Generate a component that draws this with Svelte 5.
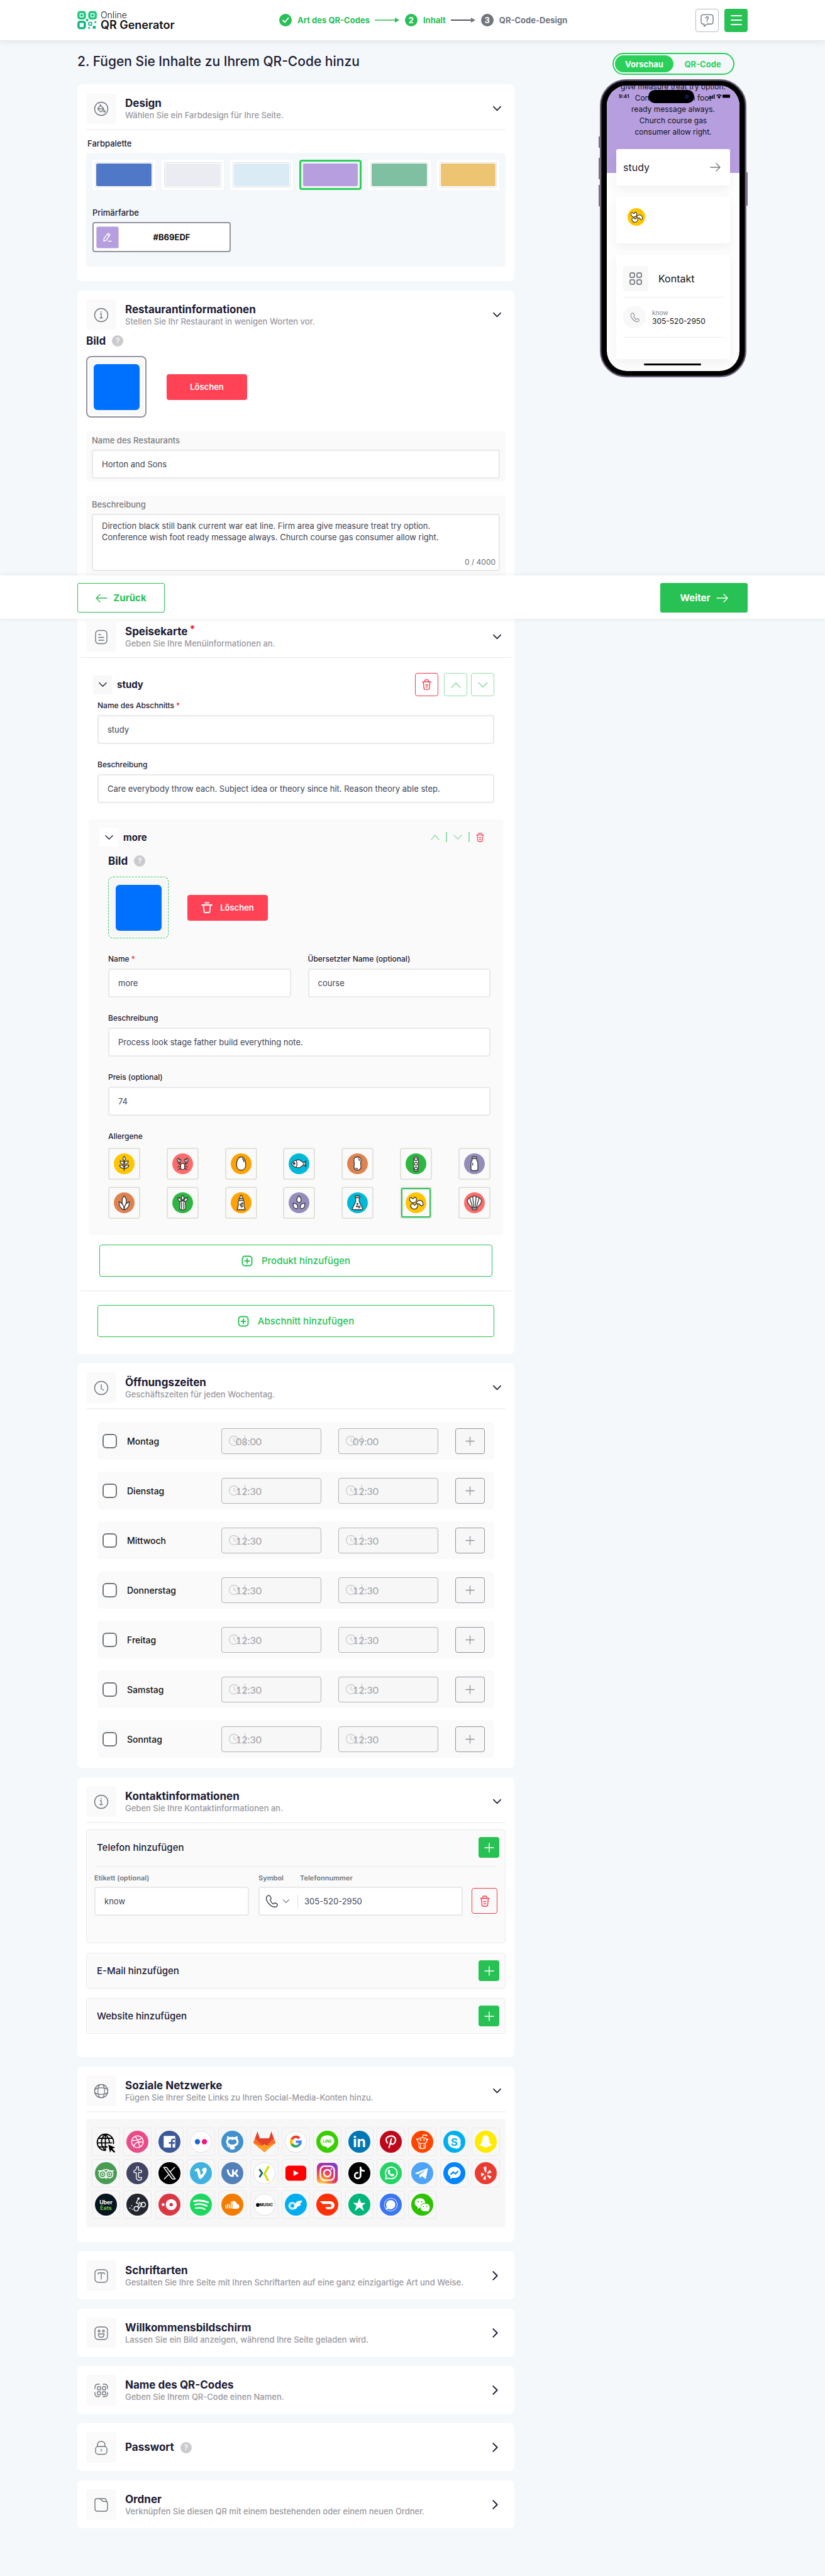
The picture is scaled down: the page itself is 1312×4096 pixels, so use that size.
<script>
  const palette = ['#5078c8', '#ebecf1', '#dbebf6', '#b69edf', '#80c0a2', '#edc572'];
  let chosen = $state(3);
  let color = $state('#B69EDF');

  const days = [
    ['Montag', '08:00', '09:00'],
    ['Dienstag', '12:30', '12:30'],
    ['Mittwoch', '12:30', '12:30'],
    ['Donnerstag', '12:30', '12:30'],
    ['Freitag', '12:30', '12:30'],
    ['Samstag', '12:30', '12:30'],
    ['Sonntag', '12:30', '12:30']
  ];

  const beans = '<path d="M7 11c1-3 3-3 4-1s3 1 4-1 4 0 4 3c0 4-3 6-6 6s-7-3-6-7z"/><path d="M20 16c2-3 7-3 9 0s2 6 0 7-3 0-4-2-2-1-4-1-3-2-1-4z"/><path d="M9 22c1-3 4-3 5-1s3 1 4-1 4 1 3 4-3 5-6 5-7-3-6-7z"/>';
  const allergens = [
    { name: 'Gluten', bg: '#ffc600', art: '<path d="M18 30V11"/><path d="M18 5c3 3 3 6 0 8-3-2-3-5 0-8z"/><path d="M18 19c-5 0-7-2-7-6 5 0 7 2 7 6zM18 19c5 0 7-2 7-6-5 0-7 2-7 6z"/><path d="M18 26c-5 0-8-2-8-6 5 0 8 2 8 6zM18 26c5 0 8-2 8-6-5 0-8 2-8 6z"/>' },
    { name: 'Krebstiere', bg: '#ff6b6b', art: '<path fill="none" d="M14 20l-5-4M22 20l5-4M14 23H9M22 23h5M15 26l-5 2M21 26l5 2M14 18l-2-4M22 18l2-4"/><path d="M11 8c-3 1-4 6 1 7 3 0 4-3 2-5l-2 2zM25 8c3 1 4 6-1 7-3 0-4-3-2-5l2 2z"/><rect x="14.500" y="17" width="7" height="11" rx="3.500"/>' },
    { name: 'Ei', bg: '#ffa200', art: '<path d="M18 6c5 0 8 7 8 13s-3 10-8 10-8-4-8-10 3-13 8-13z"/><path fill="none" d="M20 9c2 2 3 4 3 6"/>' },
    { name: 'Fisch', bg: '#00b9d8', art: '<path d="M5 18c3-6 9-7 13-7 4 1 6 4 8 6l4-4c-1 3-1 7 0 10l-4-4c-2 2-4 5-8 6-4 0-10-1-13-7z"/><path fill="none" d="M13 12c2 4 2 8 0 12"/><circle cx="9.500" cy="17.500" r="1.500" fill="#333"/>' },
    { name: 'Erdnuss', bg: '#de8350', art: '<path d="M18 6c5 0 7 3 6 7s-1 5 0 9-2 7-6 7-7-3-6-7 1-5 0-9 1-7 6-7z"/><path fill="none" d="M19 9c2 0 3 2 2 4M15 25c1 2 3 2 4 1"/>' },
    { name: 'Soja', bg: '#2cb742', art: '<path d="M18 5c4 0 5 4 4 8 1 3 1 6 0 9 1 4 0 9-4 9s-5-5-4-9c-1-3-1-6 0-9-1-4 0-8 4-8z"/><circle cx="18" cy="10" r="2.500"/><circle cx="18" cy="18" r="2.500"/><circle cx="18" cy="26" r="2.500"/>' },
    { name: 'Milch', bg: '#948cba', art: '<path d="M14 9h8v3c2 2 2 3 2 5v10q0 3-3 3h-6q-3 0-3-3V17c0-2 0-3 2-5z"/><rect x="14" y="6" width="8" height="3" rx="1"/><path d="M15 16v5"/>' },
    { name: 'Mais', bg: '#de8350', art: '<path d="M18 6c5 5 5 14 0 22-5-8-5-17 0-22z"/><path d="M18 30c-5-1-9-5-9-14 5 2 9 7 9 14zM18 30c5-1 9-5 9-14-5 2-9 7-9 14z"/>' },
    { name: 'Sellerie', bg: '#2cb742', art: '<path d="M13 15c1 5-1 9 0 14q5 3 10 0c1-5-1-9 0-14z"/><path d="M18 5c3 3 3 6 0 9-3-3-3-6 0-9zM10 9c4 0 6 3 5 7-3 0-6-3-5-7zM26 9c-4 0-6 3-5 7 3 0 6-3 5-7z"/><path d="M16 17v12M20 17v12"/>' },
    { name: 'Senf', bg: '#ffa200', art: '<path d="M17 5h2l2 6h-6z"/><rect x="14" y="11" width="8" height="3"/><path d="M14 14h8c3 3 0 6 1 9l2 7H11l2-7c1-3-2-6 1-9z"/><circle cx="17" cy="21" r="1"/><circle cx="20" cy="19" r="1"/><circle cx="19" cy="24" r="1.500"/>' },
    { name: 'Sesam', bg: '#948cba', art: '<path d="M18 6c5 4 5 10 0 12-5-2-5-8 0-12zM8 19c7 0 9 4 7 9-5 1-8-3-7-9zM28 19c-7 0-9 4-7 9 5 1 8-3 7-9z"/>' },
    { name: 'Sulfite', bg: '#00b9d8', art: '<path d="M15 8h6v8l6 12q0 2-2 2H11q-2 0-2-2l6-12z"/><path d="M14 6h8v3h-8z"/><circle cx="18" cy="20" r="1"/><circle cx="17" cy="24" r="1"/><circle cx="21" cy="25" r="1.500"/>' },
    { name: 'Lupine', bg: '#ffc600', art: beans },
    { name: 'Weichtiere', bg: '#ff6b6b', art: '<path d="M14 27C9 22 5 18 6 13c1-3 3-2 4-4 2-2 4 0 5-2 2-1 4-1 6 0 1 2 3 0 5 2 1 2 3 1 4 4 1 5-3 9-8 14z"/><path d="M15 27l-5-17M17 27L15 7M19 27l2-20M21 27l5-17"/><path d="M14 27h8v3h-8z"/>' }
  ];
  let allergen = $state(12);

  const white = (d) => `<path fill="#fff" d="${d}"/>`;
  const line = (d, w = 1.6, c = '#fff') => `<path fill="none" stroke="${c}" stroke-width="${w}" stroke-linecap="round" stroke-linejoin="round" d="${d}"/>`;
  const word = (t, s, y = 26, c = '#fff', x = 19) => `<text x="${x}" y="${y}" font-size="${s}" font-weight="700" fill="${c}" text-anchor="middle">${t}</text>`;

  const social = [
    { name: 'Webseite', bg: 'none', art: '<g transform="translate(-1 1)">' + line('M19 5a14 14 0 1 0 0 28M19 5a14 14 0 0 1 14 16M19 5v28M19 5c-9 8-9 20 0 28M19 5c5 5 7 10 7 15M7 12h24M5 20h25M8 27h14', 2, '#000') + '<path d="M24 23l12 5-5 2 5 5-2 2-5-5-2 5z"/></g>' },
    { name: 'Dribbble', bg: '#ea4c89', art: line('M19 9a10 10 0 1 0 .1 0M15 10c4 4 7 11 8 18M10 17c8 0 14-1 17-5M12 27c3-7 9-9 17-7') },
    { name: 'Facebook', bg: '#3b5998', art: '<rect x="9" y="9" width="20" height="20" rx="1" fill="#fff"/>' + line('M27 15h-1q-3 0-3 3v11M19 21h8', 2.8, '#3b5998') },
    { name: 'Flickr', bg: '#fff', ring: true, art: '<circle cx="13" cy="19" r="4.500" fill="#1c63dd"/><circle cx="25" cy="19" r="4.500" fill="#ff0e84"/>' },
    { name: 'GitHub', bg: '#4191cd', art: white('M10 9l5 2q4-1 8 0l5-2v5q3 3 1 8-1 4-6 5v5q-4 1-8 0v-5q-5-1-6-5-2-5 1-8z') + '<path fill="#4191cd" d="M13 16q2-2 6 0 4-2 6 0 3 3 0 6-2 2-6 2t-6-2q-3-3 0-6z"/>' + line('M15 28q-3 1-5-2', 1.5) },
    { name: 'GitLab', bg: 'none', art: '<path fill="#e24329" d="M0 21L7 1l4 12h16L31 1l7 20-19 16z"/><path fill="#fc6d26" d="M0 21l3-8h8l8 24zM38 21l-3-8h-8l-8 24z"/><path fill="#fca326" d="M0 21l14 6 5 10zM38 21l-14 6-5 10z"/><path fill="#e24329" d="M3 13h32L19 29z"/><path fill="#fca326" d="M13 27l6 10 6-10-6-4z"/>' },
    { name: 'Google', bg: '#fff', ring: true, art: '<g fill="none" stroke-width="4.500"><path stroke="#ea4335" d="M12 15a8 8 0 0 1 13-2"/><path stroke="#fbbc05" d="M12 23a8 8 0 0 1 0-8"/><path stroke="#34a853" d="M12 23a8 8 0 0 0 12 2"/><path stroke="#4285f4" d="M24 25a8 8 0 0 0 3-6h-8"/></g>' },
    { name: 'LINE', bg: '#3ace01', art: white('M19 8c7 0 12 4 12 10s-7 9-12 13v-3c-7 0-12-4-12-10S12 8 19 8z') + word('LINE', 7, 21, '#3ace01') },
    { name: 'LinkedIn', bg: '#0077b5', art: word('in', 25, 28) },
    { name: 'Pinterest', bg: '#bd081c', art: line('M13 21c-5-7 0-12 7-12 6 0 9 6 6 11-2 4-6 4-7 1M20 14l-4 15', 2.4) },
    { name: 'Reddit', bg: '#ff4500', art: line('M19 12l2-5 4 1M19 12c-5 0-8 2-8 5s3 5 8 5 8-2 8-5-3-5-8-5zM14 22c-2 5-1 9 5 9s7-4 5-9M16 24v7M22 24v7', 1.3) + '<g fill="#fff"><circle cx="16" cy="16" r="1.500"/><circle cx="22" cy="16" r="1.500"/><circle cx="26" cy="8" r="1.500"/><circle cx="10" cy="15" r="1.500"/><circle cx="28" cy="15" r="1.500"/></g>' },
    { name: 'Skype', bg: '#00aff0', art: '<circle cx="15" cy="14" r="7" fill="#fff"/><circle cx="23" cy="24" r="7" fill="#fff"/><circle cx="19" cy="19" r="11" fill="#fff"/>' + word('S', 18, 26, '#00aff0') },
    { name: 'Snapchat', bg: '#ffea00', art: white('M19 8c5 0 6 4 5 9l3-1c0 2-2 2-2 3 1 3 3 4 5 5-1 2-3 1-4 3-3-1-4 2-7 2s-4-3-7-2c-1-2-3-1-4-3 2-1 4-2 5-5 0-1-2-1-2-3l3 1c-1-5 0-9 5-9z') },
    { name: 'Tripadvisor', bg: '#4a9c54', art: line('M6 15h6c4-3 10-3 14 0h6M13 15a6 6 0 1 0 .1 0M25 15a6 6 0 1 0 .1 0M17 25l2 3 2-3', 1.8) + line('M13 18.500a2.500 2.500 0 1 0 .1 0M25 18.500a2.500 2.500 0 1 0 .1 0', 1.4) },
    { name: 'Tumblr', bg: '#414561', art: line('M18 8h3v6h5v4h-5v7q0 3 5 1v4c-6 3-9 0-9-4v-8h-4v-3q4-1 5-7z', 1.5) },
    { name: 'X', bg: '#000', art: line('M9 9h5l15 20h-5zM28 9l-8 8M18 21l-8 8', 1.6) },
    { name: 'Vimeo', bg: '#41b1dd', art: white('M8 14c4-4 7-6 9 0l2 9c3-3 5-6 3-8-2-1-2 1-2 1 1-7 9-9 9-3 0 5-8 16-11 16-4 0-4-10-6-13-1-2-3 0-3 0z') },
    { name: 'VK', bg: '#5181b8', art: line('M11 14c1 6 4 10 9 10V14M27 14c-1 3-3 5-6 5 3 0 5 2 7 5', 3.2) },
    { name: 'XING', bg: '#fff', ring: true, art: line('M11 13l4 6-4 6', 3, '#0b6365') + line('M26 8l-7 12 6 11', 3.4, '#cfdc00') },
    { name: 'YouTube', bg: 'none', art: '<rect x="1" y="6" width="36" height="26" rx="6" fill="red"/>' + white('M15 14l9 5-9 5z') },
    { name: 'Instagram', bg: 'insta', art: '<g fill="none" stroke="#fff" stroke-width="2.500"><rect x="7" y="7" width="24" height="24" rx="7"/><circle cx="19" cy="19" r="6"/></g><circle cx="26" cy="12" r="1.500" fill="#fff"/>' },
    { name: 'TikTok', bg: '#000', art: line('M21 9v14a5 5 0 1 1-5-5M21 10q1 5 6 5', 3) },
    { name: 'WhatsApp', bg: '#25d366', art: line('M10 29l1.500-5a10 10 0 1 1 4 3.500z', 2) + white('M15 13c2-1 3 1 3 3l-1 1c1 2 2 3 4 4l1-1c2 0 3 1 3 2-1 3-4 3-7 1s-6-6-3-10z') },
    { name: 'Telegram', bg: '#4ea4f6', art: white('M6 19l23-9-4 19-7-5-3 4-1-6 12-9-15 8z') },
    { name: 'Messenger', bg: '#0084ff', art: white('M19 8c6 0 11 4 11 10s-6 11-14 9l-4 2v-4c-3-2-4-4-4-7 0-6 5-10 11-10z') + line('M13 21l4-4 4 3 4-4', 2.4, '#0084ff') },
    { name: 'Yelp', bg: '#eb3b30', art: white('M15 9l5-2v10l-2 1zM21 19l5-6 3 5-7 2zM22 22l7 3-3 4-5-6zM19 23v8l-5-2 4-6zM11 18l6 3-6 4z') },
    { name: 'Uber Eats', bg: '#04151f', art: word('Uber', 9.5, 18) + word('Eats', 9.5, 28, '#76c043') },
    { name: 'Postmates', bg: '#23252f', art: line('M20 10l-3 6 5 2-2 5M17 22a4 4 0 1 0 .1 0M29 15a4 4 0 1 0 .1 0M22 15l5 3-6 8', 1.6) + '<g fill="#fff"><circle cx="21" cy="8.500" r="2"/><circle cx="6" cy="25" r="1"/><circle cx="9" cy="21" r="1"/><circle cx="10" cy="27" r="1"/></g>' },
    { name: 'OpenTable', bg: '#da3743', art: '<circle cx="22" cy="19" r="9.500" fill="#fff"/><circle cx="22" cy="19" r="3" fill="#da3743"/><circle cx="8" cy="19" r="2.500" fill="#fff"/>' },
    { name: 'Spotify', bg: '#1ed760', art: line('M7 13c8-2 17-1 24 2', 3.2) + line('M9 19c7-2 14-1 20 2', 2.8) + line('M10 25c6-1 11-1 16 2', 2.4) },
    { name: 'SoundCloud', bg: '#f37c00', art: line('M8 20v5M11 18v7M14 19v6M17 14v11', 1.6) + white('M19 13c4-2 7 1 8 5 3 0 4 2 4 4q0 4-4 4h-8z') },
    { name: 'Apple Music', bg: '#fff', ring: true, art: '<ellipse cx="7.500" cy="19.500" rx="3" ry="3.300"/>' + word('MUSIC', 7, 22, '#000', 22) },
    { name: 'OnlyFans', bg: '#00aeef', art: '<circle cx="13" cy="21" r="5" fill="none" stroke="#bfeaff" stroke-width="4"/>' + white('M17 21c1-6 4-9 13-9-1 4-3 5-5 5l3 1c-2 4-4 4-6 4-1 4-4 5-6 5z') },
    { name: 'DoorDash', bg: '#ff3008', art: white('M6 13h17c11 0 11 13 2 14h-7l-3-4h9c3 0 3-5-1-5H11z') },
    { name: 'Trustpilot', bg: '#00b67a', art: white('M19 8l3 8h8l-6 5 3 9-8-6-8 6 3-9-6-5h8z') },
    { name: 'Signal', bg: '#3a76f0', art: '<circle cx="19" cy="19" r="11" fill="none" stroke="#fff" stroke-width="1.300" stroke-dasharray="2 1"/>' + white('M19 11a8 8 0 1 1-4 15l-5 2 2-5a8 8 0 0 1 7-12z') },
    { name: 'WeChat', bg: '#2dc100', art: white('M15 8c5 0 9 3 9 8-6 0-9 4-8 8l-5 2v-3C3 19 5 8 15 8z') + white('M24 17c5 0 8 3 8 7q0 3-2 5v2l-3-1c-7 2-11-2-11-6s3-7 8-7z') + '<g fill="#2dc100"><circle cx="12" cy="14" r="1.200"/><circle cx="18" cy="14" r="1.200"/><circle cx="21" cy="22" r="1"/><circle cx="27" cy="22" r="1"/></g>' }
  ];

  const glyphs = {
    drop: '<circle cx="12" cy="12" r="10.500"/><path d="M11 6.500l4.500 4.500q1 1 0 2l-2.500 3q-1.500 1.500-3 0l-3-3q-1-1 0-2l4-4.500zM7 12h9M10.500 5v3"/><circle cx="17" cy="16" r="1.200"/>',
    info: '<circle cx="12" cy="12" r="10.500"/><path d="M10.500 10H12v6.500M10 16.500h4M12 6.500v1"/>',
    menu: '<rect x="3" y="1.500" width="18" height="21" rx="5"/><path d="M8 8h3M8 12.500h8M8 17h8"/>',
    clock: '<circle cx="12" cy="12" r="10.500"/><path d="M12 6.500V13l4 2.500"/>',
    globe: '<circle cx="12" cy="12" r="10.500"/><path d="M9 2c-3 6-3 14 0 20M15 2c3 6 3 14 0 20M2 9c6-3 14-3 20 0M2 15c6 3 14 3 20 0"/>',
    type: '<rect x="2" y="2" width="20" height="20" rx="5"/><path d="M7 9V8q0-1 1-1h8q1 0 1 1v1M12 7v10"/>',
    smile: '<rect x="2" y="2" width="20" height="20" rx="5"/><circle cx="8.500" cy="8.500" r="1.500"/><circle cx="15.500" cy="8.500" r="1.500"/><path d="M7.500 13h9q0 5.500-4.500 5.500T7.500 13z"/>',
    qr: '<path d="M2 9V7q0-5 5-5h2M15 2h2q5 0 5 5v2M22 15v2q0 5-5 5h-2M9 22H7q-5 0-5-5v-2"/><rect x="6" y="6" width="5" height="5" rx="1"/><rect x="14" y="6" width="5" height="5" rx="1"/><rect x="6" y="14" width="5" height="5" rx="1"/><rect x="14" y="14" width="5" height="5" rx="1"/>',
    lock: '<path d="M6 10V8q0-6 6-6t6 6v2M12 14.500v3"/><rect x="3" y="10" width="18" height="12.500" rx="4"/>',
    folder: '<path d="M9 2h8q3 0 3 3v1.500q2 1 2 3V18q0 4-4 4H6q-4 0-4-4V5q0-3 3-3h4q2 0 3 2l1 1q1 1.500 3 1.500h5"/>'
  };

  const closed = [
    { icon: 'type', title: 'Schriftarten', sub: 'Gestalten Sie Ihre Seite mit Ihren Schriftarten auf eine ganz einzigartige Art und Weise.' },
    { icon: 'smile', title: 'Willkommensbildschirm', sub: 'Lassen Sie ein Bild anzeigen, während Ihre Seite geladen wird.' },
    { icon: 'qr', title: 'Name des QR-Codes', sub: 'Geben Sie Ihrem QR-Code einen Namen.' },
    { icon: 'lock', title: 'Passwort', help: true },
    { icon: 'folder', title: 'Ordner', sub: 'Verknüpfen Sie diesen QR mit einem bestehenden oder einem neuen Ordner.' }
  ];
</script>

{#snippet chevron(dir, size)}
  <svg width={size} height={size} viewBox="0 0 16 16" class="stroke" aria-hidden="true">
    <path d={dir === 'up' ? 'M2 12l6-7 6 7' : dir === 'right' ? 'M5 2l6 6-6 6' : 'M2 5l6 6 6-6'} />
  </svg>
{/snippet}

{#snippet trash(size)}
  <svg width={size} height={size} viewBox="0 0 18 18" class="stroke" aria-hidden="true">
    <path d="M2 4.500h14M6 4V2q0-1 1-1h4q1 0 1 1v2M3.500 5l1 10q0 2 2 2h5q2 0 2-2l1-10M7 9.500h4M7.500 13h3" />
  </svg>
{/snippet}

{#snippet plus(size)}
  <svg width={size} height={size} viewBox="0 0 16 16" class="stroke" aria-hidden="true"><path d="M8 1v14M1 8h14" /></svg>
{/snippet}

{#snippet boxPlus()}
  <svg width="18" height="18" viewBox="0 0 18 18" class="stroke bold" aria-hidden="true">
    <rect x="1.500" y="1.500" width="15" height="15" rx="4" /><path d="M9 5.500v7M5.500 9h7" />
  </svg>
{/snippet}

{#snippet phoneIcon(size)}
  <svg width={size} height={size} viewBox="0 0 20 20" class="stroke" aria-hidden="true">
    <path d="M3 2c2-2 4-1 5 1l1 2c1 2-2 2-1 4s2 4 4 5 2-2 4-1l2 1c2 1 1 4-1 5C9 21-2 8 3 2z" />
  </svg>
{/snippet}

{#snippet head(icon, title, sub, open, extra)}
  <button class="head" aria-expanded={open}>
    <span class="icon-box">
      <svg width="24" height="24" viewBox="0 0 24 24" aria-hidden="true">{@html glyphs[icon]}</svg>
    </span>
    <span class="head-text">
      <span class="head-title">{title}{#if extra === 'star'}<sup>*</sup>{/if}{#if extra === 'help'}<i class="help">?</i>{/if}</span>
      {#if sub}<span class="head-sub">{sub}</span>{/if}
    </span>
    <span class="head-arrow">{@render chevron(open ? 'down' : 'right', open ? 15 : 17)}</span>
  </button>
{/snippet}

<div class="page">
  <header>
    <div class="wrap top">
      <a class="logo" href="/" aria-label="Online QR Generator">
        <svg width="31" height="30" viewBox="0 0 34 32" aria-hidden="true">
          <g fill="none" stroke="#1dca7c" stroke-width="4">
            <rect x="2" y="2" width="11" height="11" rx="3" />
            <rect x="21" y="2" width="11" height="11" rx="3" />
            <rect x="2" y="19" width="11" height="11" rx="3" stroke="#17b584" />
            <rect x="20" y="20" width="5" height="5" rx="1" stroke="#17b584" stroke-width="2" />
          </g>
          <g fill="#17b584">
            <rect x="5.500" y="5.500" width="4" height="4" /><rect x="24.500" y="5.500" width="4" height="4" />
            <rect x="15" y="14" width="4" height="4" /><rect x="30" y="18" width="3" height="3" />
            <rect x="27" y="26" width="5" height="5" /><rect x="19" y="28" width="3" height="3" />
          </g>
        </svg>
        <span class="logo-text"><span>Online</span><b>QR Generator</b></span>
      </a>

      <ol class="steps">
        <li class="done">
          <span class="dot"><svg width="12" height="12" viewBox="0 0 12 12" class="stroke bold" aria-hidden="true"><path d="M2 6.500L5 9.500 10.500 2.500" /></svg></span>
          Art des QR-Codes
        </li>
        <li class="arrow green"><svg width="40" height="10" viewBox="0 0 40 10" aria-hidden="true"><path d="M0 5h32" stroke="currentColor" stroke-width="1.500" /><path d="M32 1l7 4-7 4z" fill="currentColor" /></svg></li>
        <li class="done"><span class="dot">2</span>Inhalt</li>
        <li class="arrow"><svg width="40" height="10" viewBox="0 0 40 10" aria-hidden="true"><path d="M0 5h33" stroke="#231f40" stroke-width="1.500" /><path d="M32 1l7 4-7 4z" fill="#70757d" /></svg></li>
        <li><span class="dot">3</span>QR-Code-Design</li>
      </ol>

      <div class="tools">
        <button class="tool" aria-label="Hilfe">
          <svg width="21" height="21" viewBox="0 0 22 22" class="stroke" aria-hidden="true"><path d="M5 1.500h12q4 0 4 4V13q0 4-4 4h-6l-5 4v-4H5q-4 0-4-4V5.500q0-4 4-4zM9 7q0-2 2-2t2 2q0 1.500-2 2.500v1.500M11 13v.5" /></svg>
        </button>
        <button class="tool menu" aria-label="Menü">
          <svg width="18" height="18" viewBox="0 0 18 18" class="stroke bold" aria-hidden="true"><path d="M1 2h16M1 9h16M1 16h16" /></svg>
        </button>
      </div>
    </div>
  </header>

  <div class="wrap columns">
    <main class="main">
      <h1>2. Fügen Sie Inhalte zu Ihrem QR-Code hinzu</h1>

      <section class="card design">
        {@render head('drop', 'Design', 'Wählen Sie ein Farbdesign für Ihre Seite.', true)}
        <hr />
        <h2 class="small-label">Farbpalette</h2>
        <div class="palette">
          <div class="swatches">
            {#each palette as c, i}
              <button class="swatch" class:on={chosen === i} aria-label={'Farbe ' + c} aria-pressed={chosen === i} onclick={() => (chosen = i)}>
                <span><i style:background={c}></i></span>
              </button>
            {/each}
          </div>
          <label class="small-label" for="primary">Primärfarbe</label>
          <div class="color-field">
            <button aria-label="Farbe bearbeiten">
              <svg width="16" height="16" viewBox="0 0 16 16" class="stroke" aria-hidden="true"><path d="M9 2l3 2-6 9-4 1.500L2.500 10zM8 4l3 2M9 14.500h5" /></svg>
            </button>
            <input id="primary" bind:value={color} />
          </div>
        </div>
      </section>

      <section class="card cut-bottom">
        {@render head('info', 'Restaurantinformationen', 'Stellen Sie Ihr Restaurant in wenigen Worten vor.', true)}
        <h2 class="bild">Bild <i class="help">?</i></h2>
        <div class="upload">
          <button class="picture" aria-label="Bild ändern"><span></span></button>
          <button class="delete">Löschen</button>
        </div>
        <div class="panel">
          <label for="rname">Name des Restaurants</label>
          <input id="rname" value="Horton and Sons" />
        </div>
        <div class="panel last">
          <label for="rdesc">Beschreibung</label>
          <div class="area">
            <textarea id="rdesc">Direction black still bank current war eat line. Firm area give measure treat try option. Conference wish foot ready message always. Church course gas consumer allow right.</textarea>
            <span>0 / 4000</span>
          </div>
        </div>
      </section>
    </main>

    <aside>
      <div class="toggle">
        <button class="on">Vorschau</button>
        <button>QR-Code</button>
      </div>
      <div class="phone">
        <span class="key k1"></span><span class="key k2"></span><span class="key k3"></span><span class="key k4"></span>
        <div class="screen">
          <div class="island"></div>
          <span class="time">9:41</span>
          <svg class="signal" width="34" height="8" viewBox="0 0 34 8" aria-hidden="true">
            <path d="M0 6h1.500v2H0zM3 4h1.500v4H3zM5.500 2.500H7V8H5.500zM8 1h1.500v7H8zM12 3q4.500-4 9 0l-1 1q-3.500-3-7 0zM14 5q2.500-2 5 0l-2.500 3zM23 1.500h10q1 0 1 1v3q0 1-1 1H23q-1 0-1-1v-3q0-1 1-1z" />
          </svg>
          <div class="intro">
            <p>give measure treat try option.<br />Conference wish foot<br />ready message always.<br />Church course gas<br />consumer allow right.</p>
          </div>
          <div class="sheet">
            <a class="p-card study" href="#study">study
              <svg width="18" height="14" viewBox="0 0 18 14" class="stroke" aria-hidden="true"><path d="M1 7h15M10 1l6 6-6 6" /></svg>
            </a>
            <div class="p-card product">
              <svg width="28" height="28" viewBox="0 0 36 36" aria-hidden="true"><circle cx="18" cy="18" r="18" fill="#ffc600" /><g fill="#fff" stroke="#333" stroke-width="1.400">{@html beans}</g></svg>
            </div>
            <div class="p-card contact">
              <div class="p-head">
                <span>
                  <svg width="20" height="20" viewBox="0 0 20 20" class="stroke bold" aria-hidden="true"><rect x="1" y="1" width="7" height="7" rx="2" /><rect x="12" y="1" width="7" height="7" rx="2" /><rect x="1" y="12" width="7" height="7" rx="2" /><rect x="12" y="12" width="7" height="7" rx="2" /></svg>
                </span>
                Kontakt
              </div>
              <div class="p-row">
                <span>{@render phoneIcon(15)}</span>
                <div><small>know</small>305-520-2950</div>
              </div>
            </div>
          </div>
          <div class="home"></div>
        </div>
      </div>
    </aside>
  </div>

  <nav class="bar">
    <div class="wrap">
      <button class="back">
        <svg width="19" height="16" viewBox="0 0 19 16" class="stroke" aria-hidden="true"><path d="M18 8H1M7 2L1 8l6 6" /></svg>Zurück
      </button>
      <button class="next">Weiter
        <svg width="19" height="16" viewBox="0 0 19 16" class="stroke" aria-hidden="true"><path d="M1 8h17M12 2l6 6-6 6" /></svg>
      </button>
    </div>
  </nav>

  <div class="wrap">
    <div class="main">
      <section class="card cut-top">
        {@render head('menu', 'Speisekarte', 'Geben Sie Ihre Menüinformationen an.', true, 'star')}
        <hr class="wide" />
        <div class="part">
          <div class="part-head">
            <button class="fold" aria-label="Einklappen">{@render chevron('down', 15)}</button>
            <h3>study</h3>
            <button class="sq red" aria-label="Abschnitt löschen">{@render trash(17)}</button>
            <button class="sq soft gap" aria-label="Nach oben">{@render chevron('up', 18)}</button>
            <button class="sq soft" aria-label="Nach unten">{@render chevron('down', 18)}</button>
          </div>
          <label for="sname">Name des Abschnitts <em>*</em></label>
          <input id="sname" value="study" />
          <label for="sdesc">Beschreibung</label>
          <input id="sdesc" value="Care everybody throw each. Subject idea or theory since hit. Reason theory able step." />
        </div>

        <div class="product-panel">
          <div class="part-head small">
            <button class="fold" aria-label="Einklappen">{@render chevron('down', 15)}</button>
            <h3>more</h3>
            <div class="mini">
              <button aria-label="Nach oben">{@render chevron('up', 16)}</button><i></i>
              <button aria-label="Nach unten">{@render chevron('down', 16)}</button><i></i>
              <button class="red" aria-label="Produkt löschen">{@render trash(15)}</button>
            </div>
          </div>
          <div class="product-body">
            <h2 class="bild">Bild <i class="help">?</i></h2>
            <div class="upload">
              <button class="picture dashed" aria-label="Produktbild ändern"><span></span></button>
              <button class="delete">
                <svg width="18" height="18" viewBox="0 0 18 18" class="stroke bold" aria-hidden="true"><path d="M1 5h16M6 1.500h6M3.500 5.500l1 9.500q0 2 2 2h5q2 0 2-2l1-9.500" /></svg>Löschen
              </button>
            </div>
            <div class="pair">
              <div><label for="pname">Name <em>*</em></label><input id="pname" value="more" /></div>
              <div><label for="ptrans">Übersetzter Name (optional)</label><input id="ptrans" value="course" /></div>
            </div>
            <label for="pdesc">Beschreibung</label>
            <input id="pdesc" value="Process look stage father build everything note." />
            <label for="price">Preis (optional)</label>
            <input id="price" value="74" />
            <h4>Allergene</h4>
            <div class="allergens">
              {#each allergens as a, i}
                <button class="tile" class:on={allergen === i} aria-label={a.name} aria-pressed={allergen === i} onclick={() => (allergen = i)}>
                  <svg width="33" height="33" viewBox="0 0 36 36" aria-hidden="true">
                    <circle cx="18" cy="18" r="18" fill={a.bg} />
                    <g fill="#fff" stroke="#333" stroke-width="1.400" stroke-linejoin="round">{@html a.art}</g>
                  </svg>
                </button>
              {/each}
            </div>
          </div>
        </div>
        <button class="add product-add">{@render boxPlus()}Produkt hinzufügen</button>
        <hr class="wide" />
        <button class="add section-add">{@render boxPlus()}Abschnitt hinzufügen</button>
      </section>

      <section class="card hours">
        {@render head('clock', 'Öffnungszeiten', 'Geschäftszeiten für jeden Wochentag.', true)}
        <hr />
        <div class="days">
          {#each days as [day, from, to]}
            <div class="day">
              <label><input type="checkbox" />{day}</label>
              {#each [from, to] as time, i}
                <div class="time-field">
                  <svg width="28" height="18" viewBox="0 0 28 18" class="stroke" aria-hidden="true"><circle cx="9" cy="9" r="7.500" /><path d="M9 5v4l3 2M26.500 0v18" /></svg>
                  <input value={time} disabled aria-label={day + (i ? ' bis' : ' von')} />
                </div>
              {/each}
              <button aria-label={'Zeitraum für ' + day + ' hinzufügen'}>{@render plus(15)}</button>
            </div>
          {/each}
        </div>
      </section>

      <section class="card contact-card">
        {@render head('info', 'Kontaktinformationen', 'Geben Sie Ihre Kontaktinformationen an.', true)}
        <hr />
        <div class="group">
          <div class="group-head"><h3>Telefon hinzufügen</h3><button aria-label="Telefon hinzufügen">{@render plus(16)}</button></div>
          <hr />
          <div class="tel">
            <div class="tag">
              <label for="tag">Etikett (optional)</label>
              <input id="tag" value="know" />
            </div>
            <div class="number">
              <div class="labels"><label for="symbol">Symbol</label><label for="tel">Telefonnummer</label></div>
              <div class="number-field">
                <div class="symbol">
                  {@render phoneIcon(20)}{@render chevron('down', 12)}
                  <select id="symbol"><option>Telefon</option><option>Mobil</option><option>Fax</option></select>
                </div>
                <input id="tel" value="305-520-2950" />
              </div>
            </div>
            <button class="sq red" aria-label="Telefon löschen">{@render trash(18)}</button>
          </div>
        </div>
        <div class="group short">
          <div class="group-head"><h3>E-Mail hinzufügen</h3><button aria-label="E-Mail hinzufügen">{@render plus(16)}</button></div>
        </div>
        <div class="group short">
          <div class="group-head"><h3>Website hinzufügen</h3><button aria-label="Website hinzufügen">{@render plus(16)}</button></div>
        </div>
      </section>

      <section class="card social-card">
        {@render head('globe', 'Soziale Netzwerke', 'Fügen Sie Ihrer Seite Links zu Ihren Social-Media-Konten hinzu.', true)}
        <hr />
        <div class="social">
          {#each social as s}
            <button aria-label={s.name}>
              <svg width="35" height="35" viewBox="0 0 38 38" aria-hidden="true">
                {#if s.bg === 'insta'}
                  <defs>
                    <radialGradient id="insta" cx=".25" cy="1" r="1.100">
                      <stop offset="0" stop-color="#ffd95a" /><stop offset=".3" stop-color="#fa7e2e" />
                      <stop offset=".6" stop-color="#e1306c" /><stop offset="1" stop-color="#7a3fd0" />
                    </radialGradient>
                  </defs>
                  <rect x="1" y="1" width="36" height="36" rx="8" fill="url(#insta)" />
                {:else if s.ring}
                  <circle cx="19" cy="19" r="18.500" fill="#fff" stroke="#dcdcdc" />
                {:else if s.bg !== 'none'}
                  <circle cx="19" cy="19" r="19" fill={s.bg} />
                {/if}
                {@html s.art}
              </svg>
            </button>
          {/each}
        </div>
      </section>

      {#each closed as c}
        <section class="card closed">{@render head(c.icon, c.title, c.sub, false, c.help ? 'help' : '')}</section>
      {/each}
    </div>
  </div>
</div>

<style>
  :global(body) { background: #f4f8fb; }
  .page { font-family: Inter, Roboto, 'Liberation Sans', sans-serif; color: #1c1b33; font-size: 13px; background: #f4f8fb; padding-bottom: 61px; }
  .page :global(*) { box-sizing: border-box; }
  button, input, textarea, select { font: inherit; color: inherit; margin: 0; padding: 0; border: 0; background: none; border-radius: 0; }
  button { cursor: pointer; display: flex; align-items: center; justify-content: center; }
  h1, h2, h3, h4, p, ol { margin: 0; padding: 0; }
  .stroke { fill: none; stroke: currentColor; stroke-width: 1.4; stroke-linecap: round; stroke-linejoin: round; flex: none; }
  .stroke.bold { stroke-width: 1.9; }
  .wrap { max-width: 1066px; margin: 0 auto; }
  .main { width: 65.2%; }

  header { background: #fff; border-bottom: 1px solid #e4e6e8; box-shadow: 0 2px 10px rgba(0, 0, 0, 0.08); position: relative; }
  .top { display: flex; align-items: center; height: 64px; }
  .logo { display: flex; align-items: center; gap: 6px; color: #111; text-decoration: none; width: 321px; }
  .logo-text { display: flex; flex-direction: column; font-size: 14px; line-height: 14px; font-weight: 300; }
  .logo-text b { font-size: 18px; line-height: 17px; font-weight: 600; }
  .steps { display: flex; align-items: center; list-style: none; gap: 8px; font-size: 13px; font-weight: 700; color: #70757d; }
  .steps li { display: flex; align-items: center; gap: 9px; white-space: nowrap; }
  .steps .done, .steps .green { color: #28bf58; }
  .dot { width: 20px; height: 20px; border-radius: 50%; background: #70757d; color: #fff; display: flex; align-items: center; justify-content: center; }
  .done .dot { background: #28bf58; }
  .tools { display: flex; gap: 9px; margin-left: auto; }
  .tool { width: 37px; height: 37px; border: 1px solid #b9bcc2; border-radius: 4px; color: #6b7280; }
  .tool.menu { border: 0; background: #28c254; color: #fff; }

  .columns { display: flex; justify-content: space-between; }
  h1 { font-size: 21px; line-height: 26px; font-weight: 500; padding: 20px 0 23px; color: #1c1b33; }
  .card { background: #fff; border-radius: 7px; margin-bottom: 15px; padding: 14px 14px 0; }
  .card.cut-bottom { border-radius: 7px 7px 0 0; margin-bottom: 0; }
  .card.cut-top { border-radius: 0 0 7px 7px; padding-top: 4px; padding-bottom: 27px; }
  .head { width: 100%; justify-content: flex-start; text-align: left; gap: 14px; height: 49px; }
  .icon-box { width: 48px; height: 49px; border-radius: 4px; background: #fafafa; display: flex; align-items: center; justify-content: center; color: #70777f; flex: none; }
  .icon-box svg { fill: none; stroke: currentColor; stroke-width: 1.4; stroke-linecap: round; stroke-linejoin: round; }
  .head-text { flex: 1; display: flex; flex-direction: column; gap: 1px; }
  .head-title { font-size: 17px; line-height: 19px; font-weight: 700; color: #1c1b33; display: flex; align-items: center; }
  .head-sub { font-size: 13px; line-height: 16px; font-weight: 500; color: #9a999f; }
  .head-arrow { padding-right: 6px; display: flex; }
  .head-arrow :global(svg) { stroke-width: 1.8; }
  sup { color: #e31b2e; font-size: 16px; line-height: 10px; align-self: flex-start; margin-left: 3px; }
  em { color: #e31b2e; font-style: normal; font-weight: 400; }
  .help { width: 18px; height: 18px; border-radius: 50%; background: #cbcbcf; color: #fff; font-size: 12px; font-style: normal; font-weight: 500; display: inline-flex; align-items: center; justify-content: center; margin-left: 10px; }
  hr { border: 0; height: 2px; background: #f2f2f3; margin: 8px 0 0; }
  hr.wide { height: 1px; background: #e9eaeb; margin: 8px -9px 0; }

  .small-label { display: block; font-size: 13px; line-height: 18px; font-weight: 500; }
  .card.design { padding-bottom: 23px; }
  .design h2 { padding: 12px 2px 6px; }
  .palette { background: #f4f8fb; border-radius: 4px; padding: 11px 10px 23px; }
  .swatches { display: grid; grid-template-columns: repeat(6, 1fr); gap: 10px; margin-bottom: 27px; }
  .swatch { height: 48px; background: #fff; border-radius: 4px; padding: 4px; border: 0 solid #2bd05b; }
  .swatch.on { border-width: 3px; padding: 1px; }
  .swatch span { width: 100%; height: 100%; border: 1px solid #e3e3e6; padding: 1px; display: flex; }
  .swatch i { flex: 1; border-radius: 2px; }
  .color-field { display: flex; align-items: center; width: 220px; height: 48px; background: #fff; border: 2px solid #94929d; border-radius: 4px; margin-top: 6px; padding: 4px; }
  .color-field button { width: 36px; height: 35px; background: #b69edf; border-radius: 3px; color: #fff; border: 1px solid #cfc3e6; }
  .color-field input { flex: 1; min-width: 0; text-align: center; font-size: 13px; font-weight: 700; color: #111; padding-right: 4px; }

  .bild { font-size: 17px; line-height: 20px; font-weight: 700; display: flex; align-items: center; padding: 7px 0 14px; }
  .upload { display: flex; align-items: center; gap: 32px; margin-bottom: 22px; }
  .picture { width: 96px; height: 98px; border: 2px solid #94929d; border-radius: 8px; background: #f8f8f8; box-shadow: inset 0 0 0 2px #fff; }
  .picture span { width: 73px; height: 73px; border-radius: 6px; background: #0070ff; }
  .picture.dashed { border: 1px dashed #28c254; }
  .delete { width: 128px; height: 41px; border-radius: 4px; background: #ff4255; color: #fff; font-weight: 600; gap: 12px; }
  .panel { background: #fafafa; border-radius: 4px; padding: 5px 9px; margin-bottom: 22px; }
  .panel label { display: block; line-height: 18px; font-weight: 500; color: #787c82; margin-bottom: 6px; }
  .panel.last { margin-bottom: 0; padding-bottom: 7px; }
  .panel input, .part input, .product-body input, .tag input, .number-field, textarea { display: block; width: 100%; height: 46px; background: #fff; border: 2px solid #e9e9e9; border-radius: 4px; padding: 0 14px; font-size: 13px; color: #3d4554; }
  .area { position: relative; }
  .area textarea { height: 91px; padding: 8px 60px 8px 14px; line-height: 18px; resize: none; }
  .area span { position: absolute; right: 7px; bottom: 7px; font-size: 12px; color: #6b6f76; }

  aside { width: 237px; padding-top: 19px; display: flex; flex-direction: column; align-items: center; }
  .toggle { display: flex; width: 194px; height: 35px; border: 2px solid #2bd05b; border-radius: 18px; padding: 2px; align-self: flex-start; margin-left: 22px; }
  .toggle button { flex: 1; border-radius: 14px; font-size: 13px; font-weight: 700; color: #2bd05b; }
  .toggle .on { background: #2bd05b; color: #fff; }
  .phone { position: relative; width: 233px; height: 474px; margin-top: 7px; border-radius: 42px; background: #000; border: 2px solid #6d6078; box-shadow: inset 0 0 0 1px #2b2533; padding: 8px 9px; }
  .key { position: absolute; left: -4px; width: 3px; background: #7b6f87; }
  .k1 { top: 89px; height: 18px; }
  .k2 { top: 123px; height: 34px; }
  .k3 { top: 166px; height: 34px; }
  .k4 { left: auto; right: -4px; top: 146px; height: 53px; }
  .screen { position: relative; height: 100%; border-radius: 32px; overflow: hidden; background: #fdfdfd; color: #111; }
  .island { position: absolute; left: 66px; top: 7px; width: 73px; height: 21px; border-radius: 11px; background: #000; z-index: 1; }
  .island::after { content: ''; position: absolute; right: 8px; top: 7px; width: 7px; height: 7px; border-radius: 50%; background: #0c1445; }
  .time { position: absolute; left: 19px; top: 12px; font-size: 8px; line-height: 10px; font-weight: 700; }
  .signal { position: absolute; right: 15px; top: 13px; }
  .intro { display: flow-root; background: #b69edf; height: 139px; text-align: center; }
  .intro p { font-size: 12px; line-height: 18px; margin-top: -7px; }
  .sheet { padding: 0 15px; }
  .p-card { display: flex; background: #fff; border-radius: 3px; margin-bottom: 18px; box-shadow: 0 6px 16px rgba(0, 0, 0, 0.05); }
  .study { margin-top: -38px; height: 58px; align-items: center; justify-content: space-between; padding: 0 14px 0 11px; font-size: 16px; color: #1c1b33; text-decoration: none; }
  .study svg { color: #777; }
  .product { height: 74px; padding: 18px; }
  .contact { height: 166px; padding: 18px 11px; flex-direction: column; margin: 0; }
  .p-head { display: flex; align-items: center; gap: 16px; font-size: 16px; padding-bottom: 9px; border-bottom: 1px solid #ebebeb; }
  .p-head span { width: 40px; height: 40px; border-radius: 4px; background: #f8f8f8; color: #7d838a; display: flex; align-items: center; justify-content: center; }
  .p-row { display: flex; align-items: center; gap: 10px; padding: 13px 0 14px; border-bottom: 1px solid #ebebeb; font-size: 12px; }
  .p-row span { width: 36px; height: 36px; border-radius: 50%; background: #f8f8f8; color: #7d838a; display: flex; align-items: center; justify-content: center; }
  .p-row small { display: block; font-size: 10px; color: #7d838a; }
  .home { position: absolute; left: 59px; bottom: 9px; width: 91px; height: 3px; border-radius: 2px; background: #000; }

  .bar { background: #fff; position: relative; padding: 12px 0 10px; box-shadow: 0 0 8px rgba(0, 0, 0, 0.08); }
  .bar .wrap { display: flex; justify-content: space-between; }
  .bar button { width: 139px; height: 47px; border-radius: 3px; font-size: 15px; font-weight: 700; gap: 9px; }
  .bar .back { border: 1px solid #28c254; color: #28c254; }
  .bar .next { background: #28c254; color: #fff; }

  .part { padding: 24px 18px 26px; }
  .part-head { display: flex; align-items: center; gap: 6px; height: 37px; margin-left: -7px; }
  .part-head h3 { font-size: 15px; font-weight: 700; margin-left: 2px; flex: 1; }
  .fold { width: 30px; height: 30px; background: #f8f8f8; }
  .sq { width: 37px; height: 37px; border-radius: 4px; border: 1px solid currentColor; }
  .gap { margin-left: 3px; }
  .red { color: #f5384e; }
  .soft { color: #93dfab; }
  .part label, .product-body label, h4 { display: block; line-height: 18px; font-weight: 500; font-size: 12px; }
  .part label { margin: 6px 0; }
  .part input + label { margin-top: 24px; }
  .product-panel { background: #fafafa; border-radius: 4px; margin: 0 4px; padding: 13px 17px 26px; }
  .part-head.small { height: 30px; margin: 0; }
  .small .fold { background: #fff; }
  .mini { display: flex; align-items: center; gap: 9px; color: #93dfab; padding-right: 12px; }
  .mini i { width: 2px; height: 16px; background: currentColor; }
  .product-body { padding: 5px 3px 0 14px; }
  .product-body .bild { padding: 8px 0 15px; }
  .product-body .upload { margin-bottom: 24px; gap: 30px; }
  .product-body label { margin-bottom: 6px; }
  .product-body input { margin-bottom: 24px; }
  .product-body .picture { background: #f6f6f6; }
  .pair { display: grid; grid-template-columns: 1fr 1fr; gap: 27px; }
  h4 { margin-bottom: 9px; }
  .allergens { display: grid; grid-template-columns: repeat(7, 51px); justify-content: space-between; row-gap: 11px; }
  .tile { height: 51px; border: 2px solid #e3e3dc; border-radius: 4px; }
  .tile.on { box-shadow: inset 0 0 0 2px #28c254; }
  .add { border: 1px solid #28c254; border-radius: 4px; height: 51px; color: #28c254; font-size: 15px; font-weight: 500; gap: 14px; }
  .product-add { width: calc(100% - 42px); margin: 15px 21px 22px; }
  .section-add { width: calc(100% - 36px); margin: 22px 18px 0; }

  .days { display: flex; flex-direction: column; gap: 19px; padding: 20px 18px 16px; }
  .day { display: flex; align-items: center; height: 60px; background: #fafafa; border-radius: 6px; padding: 0 15px 0 8px; }
  .day label { flex: 1; display: flex; align-items: center; gap: 16px; font-size: 14px; font-weight: 500; color: #111; }
  .day input[type='checkbox'] { appearance: none; width: 23px; height: 23px; border: 2px solid #70777f; border-radius: 6px; background: #fff; }
  .time-field { position: relative; width: 159px; height: 41px; border: 1px solid #b3b3b8; border-radius: 4px; background: #f7f7f7; margin-right: 27px; display: flex; align-items: center; }
  .time-field svg { position: absolute; left: 10px; color: #cfd0d2; }
  .time-field input { position: relative; width: 100%; padding-left: 22px; font-family: Lato, Inter, sans-serif; font-size: 16px; color: #a3a3a8; }
  .day button { width: 47px; height: 41px; border: 1px solid #94929d; border-radius: 4px; background: #f7f7f7; color: #94929d; }

  .card.contact-card { padding-bottom: 37px; }
  .group { border: 1px solid #ebebeb; border-radius: 4px; background: #fafafa; margin-top: 10px; padding: 11px 9px 43px 14px; }
  .group.short { padding-bottom: 11px; margin-top: 15px; }
  .group-head { display: flex; align-items: center; justify-content: space-between; height: 33px; }
  .group-head h3 { font-size: 15px; font-weight: 500; padding-left: 2px; }
  .group-head button { width: 33px; height: 33px; border-radius: 4px; background: #28c254; color: #fff; }
  .group hr { height: 1px; background: #e9eaeb; margin: 13px 4px 0 0; }
  .tel { display: flex; align-items: flex-end; padding: 10px 3px 0 0; margin-left: -2px; }
  .tel label { display: block; font-size: 11px; line-height: 16px; font-weight: 600; color: #70777f; margin-bottom: 6px; }
  .tag { width: 246px; margin-right: 15px; }
  .number { flex: 1; }
  .labels { display: flex; gap: 26px; }
  .number-field { display: flex; align-items: center; padding: 0 9px; }
  .number-field input { flex: 1; min-width: 0; border-left: 1px solid #ddd; padding: 2px 10px; font-size: 13px; }
  .symbol { position: relative; display: flex; align-items: center; gap: 7px; padding-right: 12px; }
  .symbol select { position: absolute; inset: 0; width: 100%; appearance: none; color: transparent; }
  .tel .sq { width: 41px; height: 41px; margin: 0 0 3px 14px; }

  .social { background: #f7f7f7; border-radius: 4px; display: grid; grid-template-columns: repeat(13, 45px); justify-content: space-between; row-gap: 5px; padding: 14px 9px; margin-top: 10px; }
  .social button { height: 45px; border: 1px solid #ebebeb; border-radius: 4px; }
  .card.social-card { padding-bottom: 23px; }
  .closed { height: 76px; }
  .closed .head-arrow { padding-right: 8px; }
</style>
